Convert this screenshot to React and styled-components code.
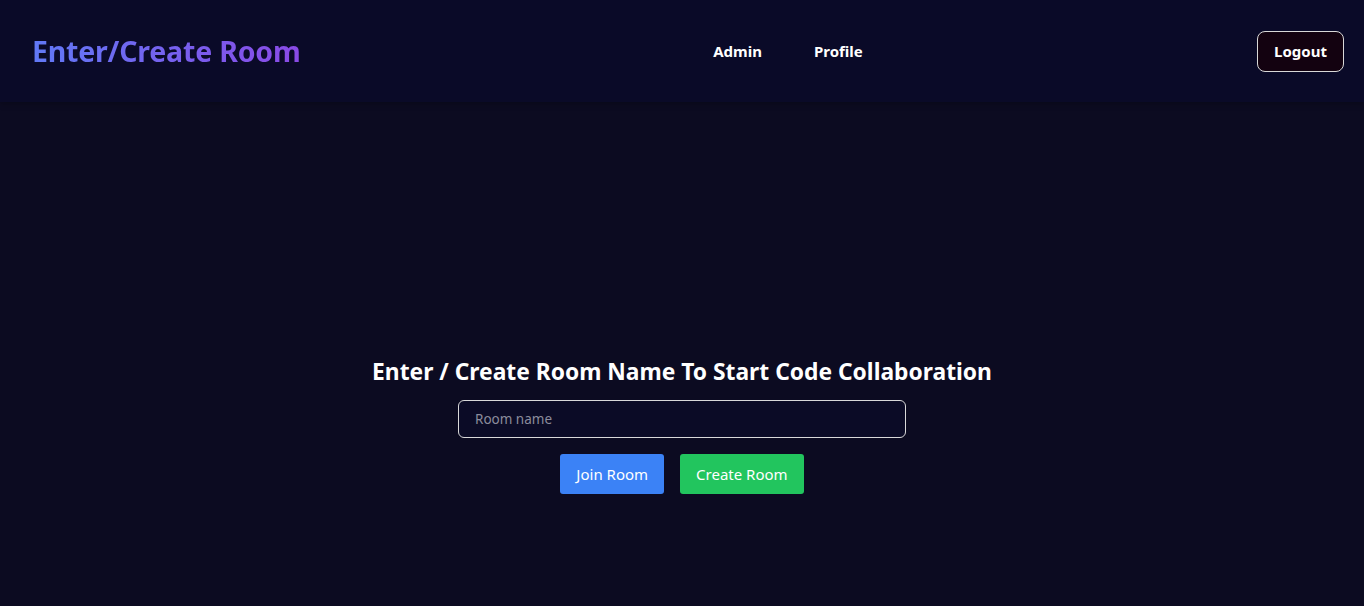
import React, { useState } from "react";
import styled, { createGlobalStyle } from "styled-components";

const GlobalStyle = createGlobalStyle`
  html, body {
    margin: 0;
    padding: 0;
    background: #0c0b21;
    font-family: "Noto Sans", "Open Sans", sans-serif;
  }
  ::-webkit-scrollbar {
    width: 4px;
  }
  ::-webkit-scrollbar-track {
    background: #f1f1f1;
  }
  ::-webkit-scrollbar-thumb {
    background: #9a9a9a;
  }
`;

const Page = styled.div`
  min-height: 100vh;
  display: flex;
  flex-direction: column;
  color: #fff;
`;

const Header = styled.header`
  height: 102px;
  display: grid;
  grid-template-columns: 1fr auto 1fr;
  align-items: center;
  padding: 0 20px 0 32px;
  background: #0a0a28;
  box-shadow: 0 2px 6px rgba(0, 0, 0, 0.25);
`;

const Brand = styled.h1`
  margin: 0;
  font-size: 28.5px;
  font-weight: 700;
  letter-spacing: -0.2px;
  background: linear-gradient(90deg, #6179f6, #8a4ae6);
  -webkit-background-clip: text;
  background-clip: text;
  color: transparent;
  justify-self: start;
`;

const Nav = styled.nav`
  display: flex;
  gap: 52px;
  margin-left: 200px;
`;

const NavLink = styled.a`
  color: #fff;
  font-size: 15px;
  font-weight: 700;
  text-decoration: none;
  cursor: pointer;
`;

const LogoutButton = styled.button`
  justify-self: end;
  height: 41px;
  padding: 0 16px;
  border: 1px solid #d8d8d8;
  border-radius: 8px;
  background: #130210;
  color: #fff;
  font-family: inherit;
  font-size: 15px;
  font-weight: 700;
  cursor: pointer;
`;

const Main = styled.main`
  height: 643px;
  display: flex;
  align-items: center;
  justify-content: center;
  box-sizing: border-box;
`;

const Panel = styled.div`
  display: flex;
  flex-direction: column;
  align-items: center;
  margin-top: 4px;
`;

const Title = styled.h2`
  margin: 0 0 14px;
  font-size: 22.8px;
  font-weight: 700;
  line-height: 28px;
`;

const RoomInput = styled.input`
  width: 448px;
  height: 38px;
  box-sizing: border-box;
  padding: 0 16px;
  border: 1px solid #d9d9d9;
  border-radius: 6px;
  background: #0b0b26;
  color: #fff;
  font-family: inherit;
  font-size: 13.5px;
  outline: none;
  &::placeholder {
    color: #8c8c9c;
  }
`;

const Actions = styled.div`
  display: flex;
  gap: 16px;
  margin-top: 16px;
`;

const ActionButton = styled.button`
  height: 40px;
  padding: 0 16px;
  border: none;
  border-radius: 3px;
  background: ${(p) => (p.$variant === "create" ? "#22c55e" : "#3b82f6")};
  color: #fff;
  font-family: inherit;
  font-size: 15px;
  cursor: pointer;
`;

export default function App() {
  const [room, setRoom] = useState("");

  return (
    <>
      <GlobalStyle />
      <Page>
        <Header>
          <Brand>Enter/Create Room</Brand>
          <Nav>
            <NavLink>Admin</NavLink>
            <NavLink>Profile</NavLink>
          </Nav>
          <LogoutButton>Logout</LogoutButton>
        </Header>
        <Main>
          <Panel>
            <Title>Enter / Create Room Name To Start Code Collaboration</Title>
            <RoomInput
              placeholder="Room name"
              value={room}
              onChange={(e) => setRoom(e.target.value)}
            />
            <Actions>
              <ActionButton>Join Room</ActionButton>
              <ActionButton $variant="create">Create Room</ActionButton>
            </Actions>
          </Panel>
        </Main>
      </Page>
    </>
  );
}
